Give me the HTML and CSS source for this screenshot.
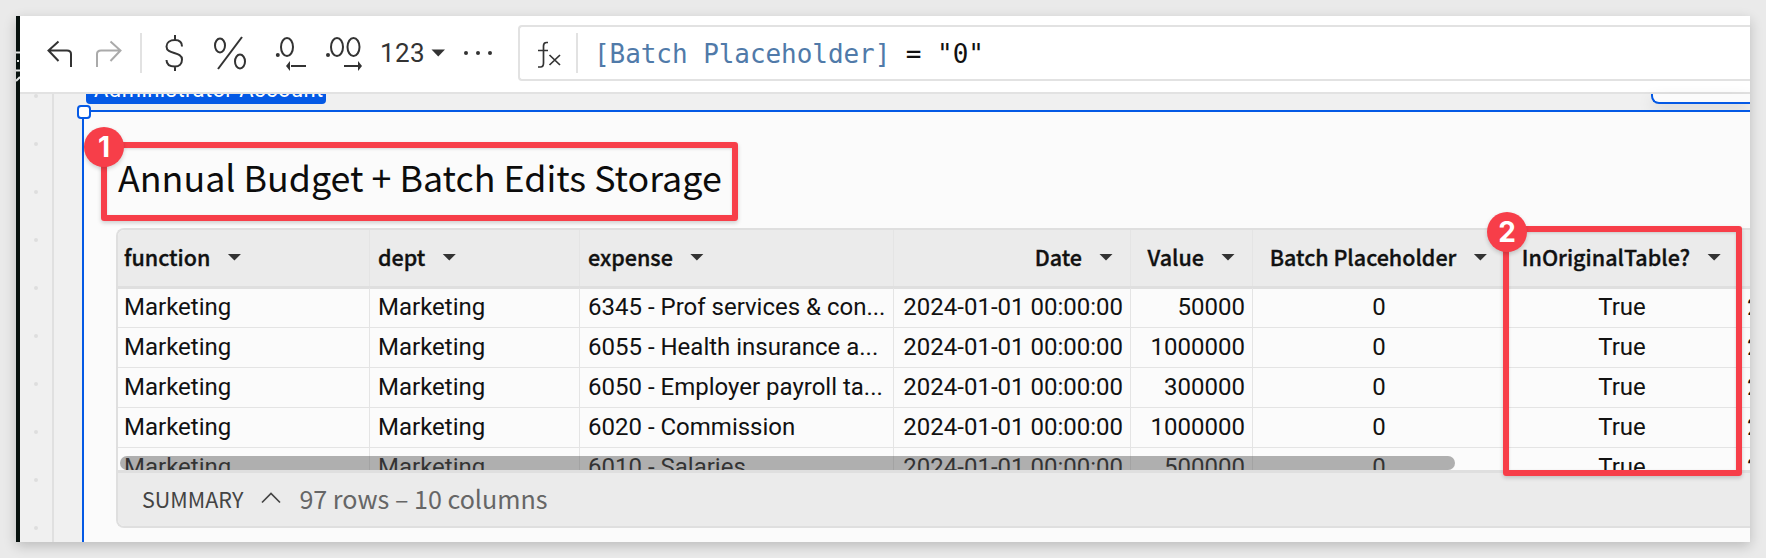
FILE: index.html
```html
<!DOCTYPE html>
<html lang="en">
<head>
<meta charset="utf-8">
<title>Annual Budget</title>
<link rel="stylesheet" href="styles.css">
</head>
<body>
<div class="window">
  <aside class="strip">
    <svg width="4" height="526" viewBox="0 0 4 526" fill="none" stroke="#e4e6e6" stroke-width="2"><path d="M0 36.500H4M1 45H3M0 54.500H4M0 65L4 61" /></svg>
  </aside>
  <div class="main">
    <header class="toolbar">
      <svg class="tools" width="498" height="76" viewBox="0 0 498 76" fill="none" stroke="#333" stroke-width="2">
        <path d="M38.500 25.500L28.500 34.500L38.500 45M28.500 34.500H47Q51 34.500 51 38V51"/>
        <path stroke="#aaa" d="M90.500 25.500L100.500 34.500L90.500 45M100.500 34.500H81Q77 34.500 77 38V51"/>
        <path stroke="#e2e2e2" d="M121 17V57"/>
        <path d="M155 19V24M155 50V55M162 30.500C162 26 159 24 155 24C150 24 146.500 26.500 146.500 30.500C146.500 39 162 35 162 43.500C162 48 159 50.500 155 50.500C149.500 50.500 146.500 48 146.500 44"/>
        <path d="M222 21L198 53"/>
        <ellipse cx="200" cy="29.500" rx="5" ry="7"/><ellipse cx="220" cy="45.500" rx="5" ry="7"/>
        <ellipse cx="267" cy="31" rx="6" ry="9"/><circle cx="257.800" cy="39" r="2" fill="#333" stroke="none"/>
        <path d="M286 50H271"/><path d="M266 50L270 45V55Z" fill="#333" stroke="none"/>
        <ellipse cx="317" cy="31" rx="6" ry="9"/><ellipse cx="333.500" cy="31" rx="6" ry="9"/><circle cx="308" cy="39" r="2" fill="#333" stroke="none"/>
        <path d="M324 50H338"/><path d="M342 50L338 45V55Z" fill="#333" stroke="none"/>
        <text class="format" x="360" y="45.500">123</text>
        <path d="M411.500 33.500H425L418.250 40.500Z" fill="#333" stroke="none"/>
        <g fill="#333" stroke="none"><circle cx="446" cy="37" r="2"/><circle cx="458" cy="37" r="2"/><circle cx="470" cy="37" r="2"/></g>
      </svg>
      <div class="formula">
        <svg class="fx" width="56" height="52" viewBox="0 0 56 52" fill="none" stroke="#333" stroke-width="1.700"><path d="M28 15.500H26.500Q23.500 15.500 23.500 19V36Q23.500 40 20.500 40H18M18 23.500H28M29.500 28L40 38M40 28L29.500 38"/></svg>
        <span class="divider"></span>
        <code><span class="ref">[Batch Placeholder]</span> = "0"</code>
      </div>
    </header>
    <div class="workspace">
      <div class="gutter">
        <i></i><i></i><i></i><i></i><i></i><i></i><i></i><i></i><i></i><i></i>
      </div>
      <div class="canvas">
        <div class="overhead">
          <div class="source">Administrator Account</div>
          <div class="menu"></div>
        </div>
        <section class="panel">
          <span class="handle"></span>
          <h1>Annual Budget + Batch Edits Storage</h1>
          <div class="table">
            <div class="row head">
              <div>function<b></b></div><div>dept<b></b></div><div>expense<b></b></div><div>Date<b></b></div><div>Value<b></b></div><div>Batch Placeholder<b></b></div><div>InOriginalTable?<b></b></div><div></div>
            </div>
            <div class="rows">
              <div class="row"><div>Marketing</div><div>Marketing</div><div>6345 - Prof services &amp; con...</div><div>2024-01-01 00:00:00</div><div>50000</div><div>0</div><div>True</div><div>2</div></div>
              <div class="row"><div>Marketing</div><div>Marketing</div><div>6055 - Health insurance a...</div><div>2024-01-01 00:00:00</div><div>1000000</div><div>0</div><div>True</div><div>2</div></div>
              <div class="row"><div>Marketing</div><div>Marketing</div><div>6050 - Employer payroll ta...</div><div>2024-01-01 00:00:00</div><div>300000</div><div>0</div><div>True</div><div>2</div></div>
              <div class="row"><div>Marketing</div><div>Marketing</div><div>6020 - Commission</div><div>2024-01-01 00:00:00</div><div>1000000</div><div>0</div><div>True</div><div>2</div></div>
              <div class="row"><div>Marketing</div><div>Marketing</div><div>6010 - Salaries</div><div>2024-01-01 00:00:00</div><div>500000</div><div>0</div><div>True</div><div>2</div></div>
              <span class="scrollbar"></span>
            </div>
            <footer>
              <span class="summary">SUMMARY</span>
              <svg width="20" height="12" viewBox="0 0 20 12" fill="none" stroke="#444" stroke-width="1.700"><path d="M1 10.500L10 1.500L19 10.500"/></svg>
              <span class="count">97 rows – 10 columns</span>
            </footer>
          </div>
        </section>
      </div>
    </div>
  </div>
</div>
<div class="callout first"><span>1</span></div>
<div class="callout second"><span>2</span></div>
</body>
</html>
```
FILE: styles.css
```css
* { box-sizing: border-box; }
body { margin: 0; padding: 16px; width: 1766px; height: 558px; overflow: hidden; background: #eaeaea; font-family: Roboto, sans-serif; position: relative; }
.window { display: flex; width: 1734px; height: 526px; box-shadow: 0 4px 12px rgba(0,0,0,.2); background: #f0f0f0; }
.strip { width: 4px; background: #07110e; overflow: hidden; }
.main { width: 1730px; display: flex; flex-direction: column; overflow: hidden; }
.toolbar { display: flex; height: 78px; flex: none; background: #fff; border-bottom: 2px solid #e2e2e2; }
.tools { flex: none; }
.format { font: 26px Roboto, sans-serif; letter-spacing: .4px; fill: #333; stroke: none; }
.formula { display: flex; align-items: center; flex: 1; height: 56px; margin-top: 9px; border: 2px solid #e2e2e2; border-right: 0; border-radius: 4px 0 0 4px; }
.fx { flex: none; }
.divider { width: 2px; height: 40px; background: #e2e2e2; }
code { margin-left: 16px; padding-top: 2px; font: 26px "DejaVu Sans Mono", monospace; letter-spacing: -.06px; white-space: pre; color: #111; }
.ref { color: #507aa9; }
.workspace { display: flex; height: 448px; }
.gutter { width: 34px; flex: none; border-right: 2px solid #e0e0e0; display: flex; flex-direction: column; gap: 44px; align-items: center; }
.gutter i { width: 4px; height: 4px; border-radius: 2px; background: #dedede; flex: none; }
.canvas { width: 1696px; padding-left: 28px; flex: none; }
.overhead { height: 16px; display: flex; justify-content: space-between; padding-left: 4px; }
.source { width: 240px; height: 10px; background: #0459e5; border-radius: 0 0 4px 4px; color: #fff; font-size: 22px; line-height: 22px; letter-spacing: .45px; display: flex; align-items: flex-end; overflow: hidden; padding: 0 8px 3px; white-space: nowrap; }
.menu { width: 99px; height: 10px; background: #fbfbfb; border: solid #0459e5; border-width: 0 0 2px 2px; border-radius: 0 0 0 8px; box-shadow: 0 6px 16px rgba(0,0,0,.12); }
.panel { position: relative; height: 432px; background: #fbfbfb; border: solid #0459e5; border-width: 2px 0 0 2px; padding-left: 32px; }
.handle { position: absolute; left: -7px; top: -7px; width: 14px; height: 14px; background: #fff; border: 2px solid #0459e5; border-radius: 4px; }
h1 { height: 116px; margin: 0; padding: 38px 0 0 2px; font: 400 35.8px/52px "Noto Sans CJK JP", sans-serif; color: #0c0c0c; white-space: nowrap; }
.table { width: 1634px; height: 300px; border: 2px solid #dfdfdf; border-right: 0; border-radius: 8px 0 0 8px; overflow: hidden; }
.row { display: grid; grid-template-columns: 252px 210px 314px 237px 122px 252px 236px 9px; height: 40px; font-size: 24px; color: #111; }
.row > div { display: flex; align-items: center; border-right: 1px solid #e4e4e4; border-bottom: 1px solid #e4e4e4; padding: 0 7px 2px 8px; white-space: nowrap; overflow: hidden; }
.row > div:first-child { padding-left: 6px; }
.row > div:nth-child(4), .row > div:nth-child(5) { justify-content: flex-end; }
.row > div:nth-child(6), .row > div:nth-child(7) { justify-content: center; }
.row > div:nth-child(7) { padding-right: 9px; }
.row > div:last-child { border-right: 0; padding: 0 0 2px 6px; }
.row.head { height: 59px; font: 500 21.5px "Noto Sans CJK JP", sans-serif; background: #ebebeb; border-bottom: 3px solid #dfdfdf; -webkit-text-stroke: .35px #111; }
.row.head > div { border-bottom: 0; padding-bottom: 4px; }
.row.head > div:nth-child(n+4):nth-child(-n+7) { padding: 0 17px 4px; }
.row.head > div:nth-child(7) { padding-right: 19px !important; }
.head b { width: 14px; height: 7px; margin: 2px 0 0 17px; background: #333; clip-path: polygon(0 0, 100% 0, 50% 100%); flex: none; }
.rows { position: relative; height: 182px; margin-top: -1px; overflow: hidden; }
.scrollbar { position: absolute; left: 2px; top: 168px; width: 1335px; height: 14px; border-radius: 7px; background: rgba(90,90,90,.47); }
footer { display: flex; align-items: center; height: 56px; border-top: 3px solid #dfdfdf; background: #ebebeb; padding: 0 0 3px 24px; font-family: "Noto Sans CJK JP", sans-serif; color: #666; }
.summary { font-size: 21.5px; color: #444; }
footer svg { margin: 0 18px; }
.count { font-size: 25.1px; }
.callout { position: absolute; border: 6px solid #f73e49; border-radius: 3px; box-shadow: 0 2px 4px rgba(0,0,0,.18), inset 0 1px 3px rgba(0,0,0,.15); }
.callout span { position: absolute; width: 40px; height: 40px; border-radius: 50%; background: #f73e49; color: #fff; font: 700 28px/40px Inter, sans-serif; text-align: center; box-shadow: 0 2px 4px rgba(0,0,0,.18); }
.first { left: 101px; top: 142px; width: 637px; height: 79px; }
.first span { left: -23px; top: -21px; }
.second { left: 1503px; top: 226px; width: 239px; height: 250px; }
.second span { left: -22px; top: -20px; }
```
